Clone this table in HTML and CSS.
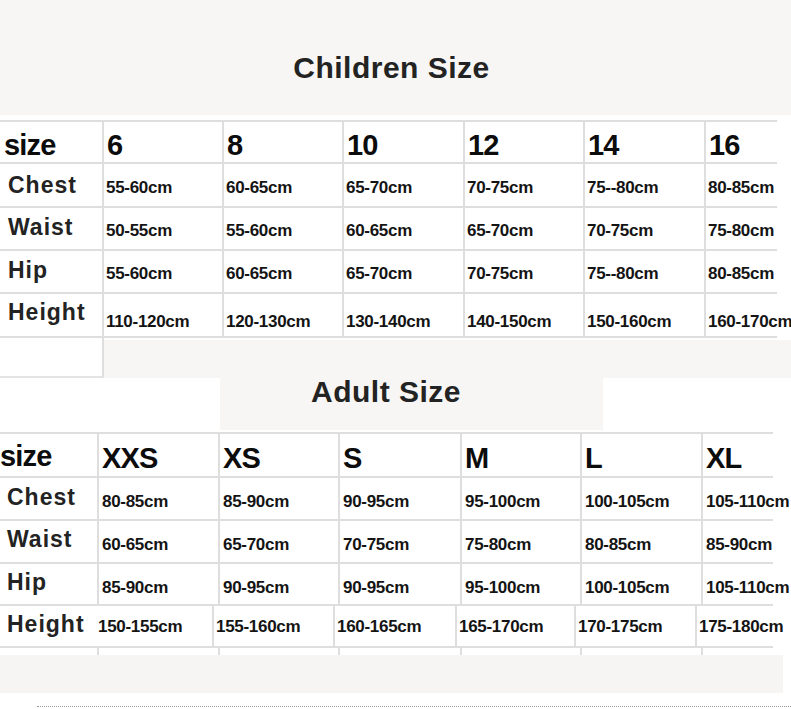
FILE: index.html
```html
<!DOCTYPE html>
<html lang="en">
<head>
<meta charset="utf-8">
<title>Size Chart</title>
<link rel="stylesheet" href="styles.css">
</head>
<body>
<div class="page">
  <header class="band">
    <h1 class="title title-kids">Children Size</h1>
  </header>
  <div class="band-gap"></div>

  <section class="chart kids">
    <div class="row r-size">
      <div class="cell lab head">size</div>
      <div class="cell head">6</div>
      <div class="cell head">8</div>
      <div class="cell head">10</div>
      <div class="cell head">12</div>
      <div class="cell head">14</div>
      <div class="cell head last">16</div>
    </div>
    <div class="row r-chest">
      <div class="cell lab">Chest</div>
      <div class="cell val">55-60cm</div>
      <div class="cell val">60-65cm</div>
      <div class="cell val">65-70cm</div>
      <div class="cell val">70-75cm</div>
      <div class="cell val">75--80cm</div>
      <div class="cell val last">80-85cm</div>
    </div>
    <div class="row r-waist">
      <div class="cell lab">Waist</div>
      <div class="cell val">50-55cm</div>
      <div class="cell val">55-60cm</div>
      <div class="cell val">60-65cm</div>
      <div class="cell val">65-70cm</div>
      <div class="cell val">70-75cm</div>
      <div class="cell val last">75-80cm</div>
    </div>
    <div class="row r-hip">
      <div class="cell lab">Hip</div>
      <div class="cell val">55-60cm</div>
      <div class="cell val">60-65cm</div>
      <div class="cell val">65-70cm</div>
      <div class="cell val">70-75cm</div>
      <div class="cell val">75--80cm</div>
      <div class="cell val last">80-85cm</div>
    </div>
    <div class="row r-height">
      <div class="cell lab">Height</div>
      <div class="cell val">110-120cm</div>
      <div class="cell val">120-130cm</div>
      <div class="cell val">130-140cm</div>
      <div class="cell val">140-150cm</div>
      <div class="cell val">150-160cm</div>
      <div class="cell val last">160-170cm</div>
    </div>
  </section>

  <div class="gap-row">
    <div class="gap-cell"></div>
    <div class="gap-fill"></div>
  </div>

  <div class="adult-title-row">
    <div class="adult-box">
      <h2 class="title title-adult">Adult Size</h2>
    </div>
  </div>

  <section class="chart adult">
    <div class="row r-size">
      <div class="cell lab head">size</div>
      <div class="cell head">XXS</div>
      <div class="cell head">XS</div>
      <div class="cell head">S</div>
      <div class="cell head">M</div>
      <div class="cell head">L</div>
      <div class="cell head last">XL</div>
    </div>
    <div class="row r-chest">
      <div class="cell lab">Chest</div>
      <div class="cell val">80-85cm</div>
      <div class="cell val">85-90cm</div>
      <div class="cell val">90-95cm</div>
      <div class="cell val">95-100cm</div>
      <div class="cell val">100-105cm</div>
      <div class="cell val last">105-110cm</div>
    </div>
    <div class="row r-waist">
      <div class="cell lab">Waist</div>
      <div class="cell val">60-65cm</div>
      <div class="cell val">65-70cm</div>
      <div class="cell val">70-75cm</div>
      <div class="cell val">75-80cm</div>
      <div class="cell val">80-85cm</div>
      <div class="cell val last">85-90cm</div>
    </div>
    <div class="row r-hip">
      <div class="cell lab">Hip</div>
      <div class="cell val">85-90cm</div>
      <div class="cell val">90-95cm</div>
      <div class="cell val">90-95cm</div>
      <div class="cell val">95-100cm</div>
      <div class="cell val">100-105cm</div>
      <div class="cell val last">105-110cm</div>
    </div>
    <div class="row r-height">
      <div class="cell lab">Height</div>
      <div class="cell val">150-155cm</div>
      <div class="cell val">155-160cm</div>
      <div class="cell val">160-165cm</div>
      <div class="cell val">165-170cm</div>
      <div class="cell val">170-175cm</div>
      <div class="cell val last">175-180cm</div>
    </div>
    <div class="row r-stub">
      <div class="cell"></div>
      <div class="cell"></div>
      <div class="cell"></div>
      <div class="cell"></div>
      <div class="cell"></div>
      <div class="cell"></div>
      <div class="cell last"></div>
    </div>
  </section>

  <div class="foot-band"></div>
  <div class="dotted"></div>
</div>
</body>
</html>
```

FILE: styles.css
```css
* { box-sizing: border-box; }

html, body {
  margin: 0;
  padding: 0;
  background: #ffffff;
}

.page {
  width: 791px;
  height: 709px;
  overflow: hidden;
  font-family: "Liberation Sans", Arial, sans-serif;
  color: #1f1f1f;
}

/* ---------- title bands ---------- */
.band {
  height: 115px;
  background: #f7f6f4;
  padding-top: 53px;
}

.title {
  margin: 0;
  font-family: "Liberation Sans", Arial, sans-serif;
  font-weight: 700;
  font-size: 30px;
  line-height: 30px;
  letter-spacing: 0.5px;
  color: #222322;
}

.title-kids {
  text-align: center;
  padding-right: 8px;
}

.band-gap { height: 5px; }

.gap-row {
  display: flex;
  height: 40px;
}

.gap-cell {
  width: 104px;
  height: 40px;
  border-right: 2px solid #dedede;
  border-bottom: 2px solid #e4e4e4;
  background: #ffffff;
}

.gap-fill {
  flex: 1;
  margin-top: 2px;
  background: #f7f6f4;
}

.adult-title-row {
  height: 54px;
  padding-left: 220px;
}

.adult-box {
  width: 383px;
  height: 52px;
  background: #f7f6f4;
  padding-top: 1px;
}

.title-adult {
  line-height: 26px;
  text-align: center;
  padding-right: 51px;
}

.foot-band {
  width: 783px;
  height: 38px;
  background: #f6f5f3;
}

.dotted {
  margin-top: 13px;
  margin-left: 37px;
  border-top: 1px dotted #9a9a9a;
}

/* ---------- charts ---------- */
.chart {
  border-top: 2px solid #dedede;
}

.kids { width: 777px; }
.adult { width: 773px; }

.row {
  display: grid;
}

.kids .row { grid-template-columns: 104px 120px 120px 121px 120px 121px 71px; }
.adult .row { grid-template-columns: 99px 121px 120px 122px 120px 121px 70px; }
.adult .r-height { grid-template-columns: 96px 118px 121px 122px 119px 121px 76px; }

.cell {
  display: flex;
  align-items: flex-end;
  overflow: hidden;
  white-space: nowrap;
  line-height: 1;
  border-right: 2px solid #dedede;
  border-bottom: 2px solid #dedede;
  background: #ffffff;
}

.cell.last {
  border-right: none;
  overflow: visible;
}

.lab {
  font-family: "Liberation Sans", Arial, sans-serif;
  font-weight: 700;
  font-size: 23px;
  letter-spacing: 1px;
  color: #222322;
  padding-left: 8px;
}

.head {
  font-family: "Liberation Sans", Arial, sans-serif;
  font-weight: 700;
  font-size: 29px;
  letter-spacing: -0.8px;
  color: #0c0c0c;
  padding-left: 3px;
}

.lab.head { padding-left: 4px; }
.adult .lab.head { padding-left: 0; }

.val {
  font-family: "Liberation Sans", Arial, sans-serif;
  font-weight: 700;
  font-size: 17px;
  letter-spacing: -0.3px;
  color: #141414;
  padding-left: 2px;
}

.adult .val { padding-left: 3px; }
.adult .lab { padding-left: 7px; }
.adult .r-height .val { padding-left: 2px; }
.adult .r-height .lab { border-right: none; }

/* kids rows */
.kids .r-size { height: 42px; }
.kids .r-chest { height: 44px; }
.kids .r-waist { height: 43px; }
.kids .r-hip { height: 43px; }
.kids .r-height { height: 44px; }

.kids .r-size .cell { padding-bottom: 2px; }
.kids .r-chest .lab { padding-bottom: 9px; }
.kids .r-chest .val { padding-bottom: 10px; }
.kids .r-waist .lab { padding-bottom: 10px; }
.kids .r-waist .val { padding-bottom: 10px; }
.kids .r-hip .lab { padding-bottom: 10px; }
.kids .r-hip .val { padding-bottom: 10px; }
.kids .r-height .lab { padding-bottom: 12px; }
.kids .r-height .val { padding-bottom: 6px; }

/* adult rows */
.adult .r-size { height: 44px; }
.adult .r-chest { height: 43px; }
.adult .r-waist { height: 43px; }
.adult .r-hip { height: 42px; }
.adult .r-height { height: 42px; }
.adult .r-stub { height: 7px; }
.adult .r-stub .cell { border-bottom: none; }

.adult .r-size .cell { padding-bottom: 3px; }
.adult .r-size .lab { padding-bottom: 5px; }
.adult .r-chest .lab { padding-bottom: 10px; }
.adult .r-chest .val { padding-bottom: 9px; }
.adult .r-waist .lab { padding-bottom: 11px; }
.adult .r-waist .val { padding-bottom: 9px; }
.adult .r-hip .lab { padding-bottom: 10px; }
.adult .r-hip .val { padding-bottom: 8px; }
.adult .r-height .lab { padding-bottom: 10px; }
.adult .r-height .val { padding-bottom: 11px; }
```
